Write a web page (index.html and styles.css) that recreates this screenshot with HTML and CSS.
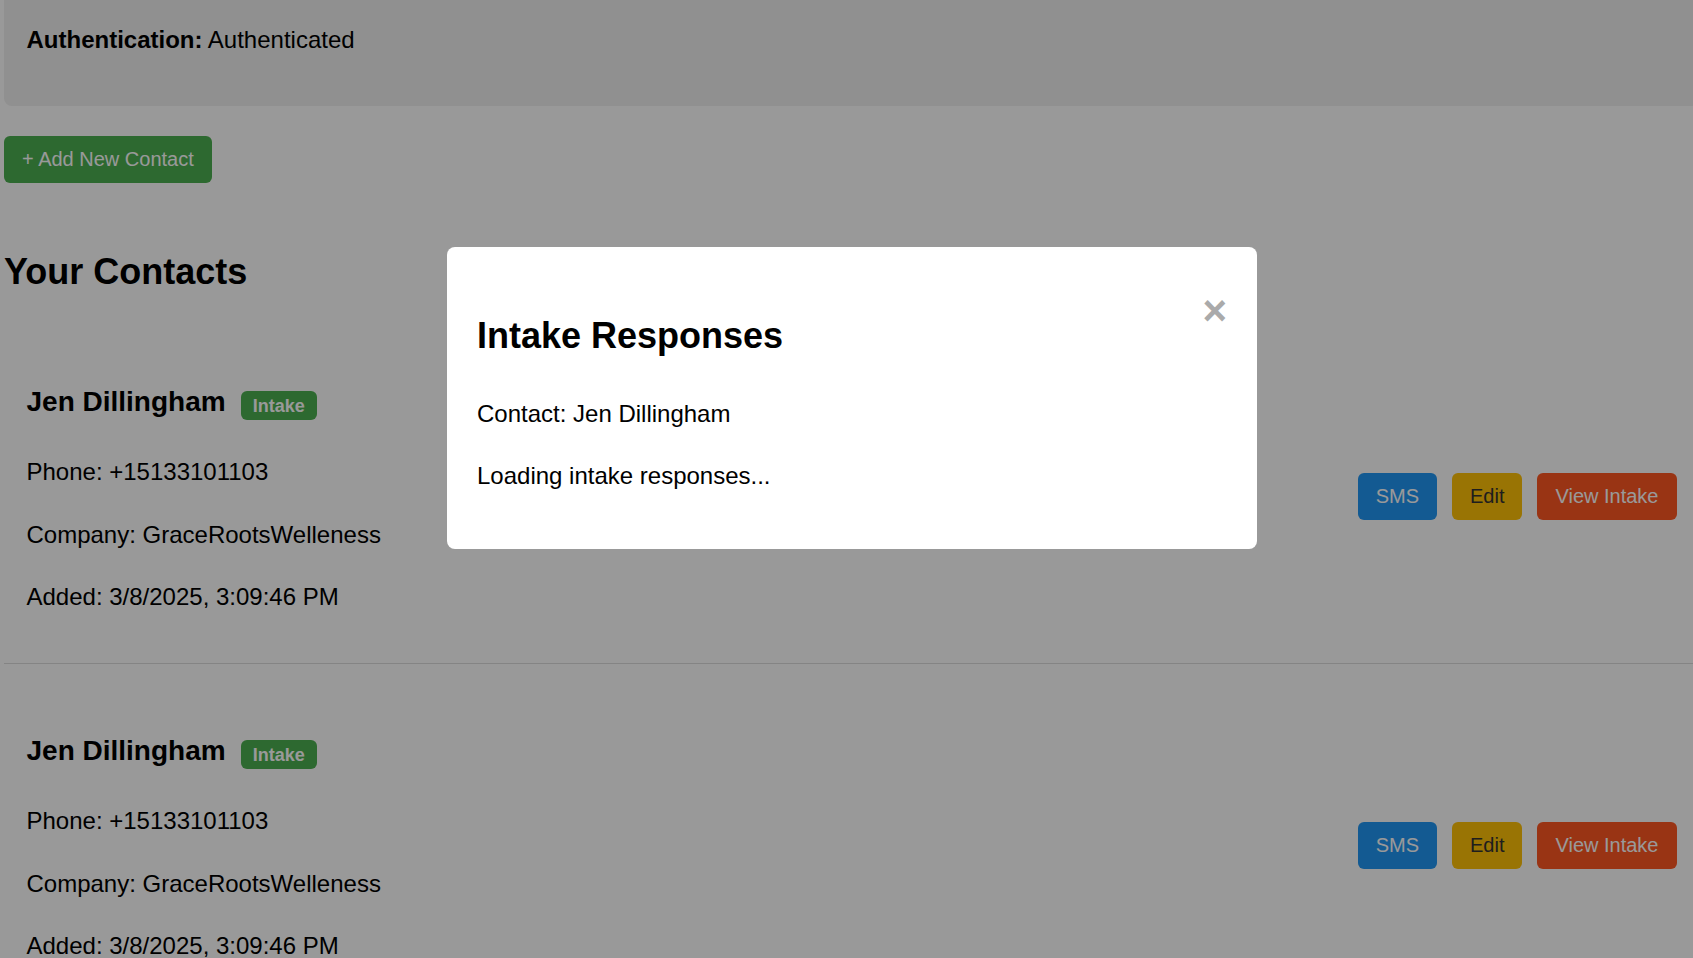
FILE: index.html
```html
<!DOCTYPE html>
<html lang="en">
<head>
<meta charset="utf-8">
<title>Contacts</title>
<link rel="stylesheet" href="styles.css">
</head>
<body>
<div class="page">
  <div class="status-panel">
    <p><strong>Authentication:</strong> Authenticated</p>
  </div>
  <div class="toolbar">
    <button class="btn btn-green">+ Add New Contact</button>
  </div>
  <h2 class="section-title">Your Contacts</h2>
  <div class="contact-list">
    <div class="card">
      <div class="info">
        <h3>Jen Dillingham<span class="badge">Intake</span></h3>
        <p>Phone: +15133101103</p>
        <p>Company: GraceRootsWelleness</p>
        <p>Added: 3/8/2025, 3:09:46 PM</p>
      </div>
      <div class="actions">
        <button class="btn btn-blue">SMS</button>
        <button class="btn btn-yellow">Edit</button>
        <button class="btn btn-red">View Intake</button>
      </div>
    </div>
    <div class="card">
      <div class="info">
        <h3>Jen Dillingham<span class="badge">Intake</span></h3>
        <p>Phone: +15133101103</p>
        <p>Company: GraceRootsWelleness</p>
        <p>Added: 3/8/2025, 3:09:46 PM</p>
      </div>
      <div class="actions">
        <button class="btn btn-blue">SMS</button>
        <button class="btn btn-yellow">Edit</button>
        <button class="btn btn-red">View Intake</button>
      </div>
    </div>
  </div>
</div>
<div class="overlay">
  <div class="modal">
    <span class="close">&times;</span>
    <h2>Intake Responses</h2>
    <p>Contact: Jen Dillingham</p>
    <p>Loading intake responses...</p>
  </div>
</div>
</body>
</html>
```
FILE: styles.css
```css
html, body {
  margin: 0;
  padding: 0;
  overflow: hidden;
  background: #ffffff;
}

body {
  font-family: "Liberation Sans", Arial, sans-serif;
  font-size: 24px;
  line-height: 1.6;
  color: #000;
}

.page {
  margin-left: 4px;
  width: 1695px;
}

.status-panel {
  background: #f0f0f0;
  border-radius: 0 0 8px 8px;
  padding: 21px 22.5px 47px;
}

.status-panel p {
  margin: 0;
}

.toolbar {
  margin-top: 30px;
  margin-bottom: 60px;
  display: flex;
}

.btn {
  font-family: "Liberation Sans", Arial, sans-serif;
  font-size: 20px;
  line-height: 23px;
  padding: 12px 18px;
  border: none;
  border-radius: 6px;
  color: #fff;
  cursor: pointer;
}

.btn-green { background: #4caf50; }
.btn-blue { background: #2196f3; }
.btn-yellow { background: #ffc107; color: #333; }
.btn-red { background: #ff5722; }

.section-title {
  font-size: 36px;
  margin: 0 0 29px;
}

.card {
  display: flex;
  justify-content: space-between;
  align-items: center;
  padding: 22.5px;
  border-bottom: 1px solid #ddd;
  margin-bottom: 15px;
}

.info h3 {
  font-size: 28px;
  margin: 28px 0;
}

.info p {
  margin: 24px 0;
}

.badge {
  display: inline;
  margin-left: 15px;
  font-size: 18px;
  background: #4caf50;
  color: #fff;
  padding: 4.5px 12px;
  border-radius: 6px;
}

.actions {
  display: flex;
  gap: 15px;
}

.overlay {
  position: fixed;
  inset: 0;
  background: rgba(0, 0, 0, 0.4);
  display: flex;
  justify-content: center;
  align-items: flex-start;
  padding-top: 247px;
  padding-left: 11px;
  box-sizing: border-box;
}

.modal {
  background: #fff;
  width: 810px;
  box-sizing: border-box;
  padding: 30px;
  border-radius: 8px;
}

.modal h2 {
  font-size: 36px;
  margin: 30px 0;
}

.modal p {
  margin: 24px 0;
}

.close {
  float: right;
  color: #aaa;
  font-size: 42px;
  font-weight: bold;
  cursor: pointer;
}
```
